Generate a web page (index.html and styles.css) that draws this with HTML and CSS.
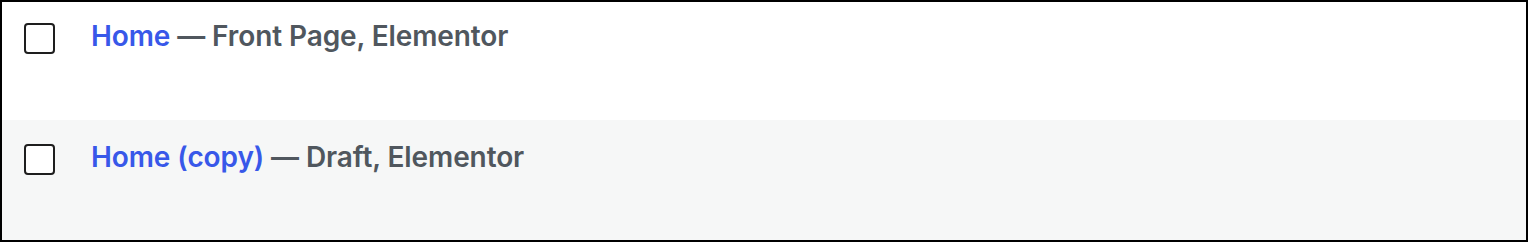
FILE: index.html
```html
<!DOCTYPE html>
<html lang="en">
<head>
    <meta charset="UTF-8">
    <meta name="viewport" content="width=device-width, initial-scale=1.0">
    <title>Pages</title>
    <link rel="stylesheet" href="styles.css">
</head>
<body>
    <div class="list-table">
        <div class="row">
            <span class="check"></span>
            <div class="row-title">
                <a href="#">Home</a> — Front Page, Elementor
            </div>
        </div>
        <div class="row alternate">
            <span class="check"></span>
            <div class="row-title">
                <a href="#">Home (copy)</a> — Draft, Elementor
            </div>
        </div>
    </div>
</body>
</html>
```

FILE: styles.css
```css
body {
    margin: 0;
    font-family: Inter, "Noto Sans", sans-serif;
    background-color: #fff;
}

.list-table {
    box-sizing: border-box;
    height: 242px;
    border: 2px solid #000;
    overflow: hidden;
}

.row {
    box-sizing: border-box;
    display: flex;
    align-items: flex-start;
    gap: 36px;
    height: 120px;
    padding: 19px 22px;
    background-color: #fff;
}

.row:first-child {
    height: 118px;
    padding-top: 16px;
}

.row.alternate {
    background-color: #f6f7f7;
}

.check {
    box-sizing: border-box;
    flex: none;
    width: 31px;
    height: 31px;
    margin-top: 5px;
    border: 2px solid #1e1e1e;
    border-radius: 4px;
    background-color: #fff;
}

.row-title {
    font-size: 28px;
    font-weight: 600;
    line-height: 36px;
    letter-spacing: -0.1px;
    color: #50575e;
}

.row-title a {
    color: #3858e9;
    text-decoration: none;
}
```
